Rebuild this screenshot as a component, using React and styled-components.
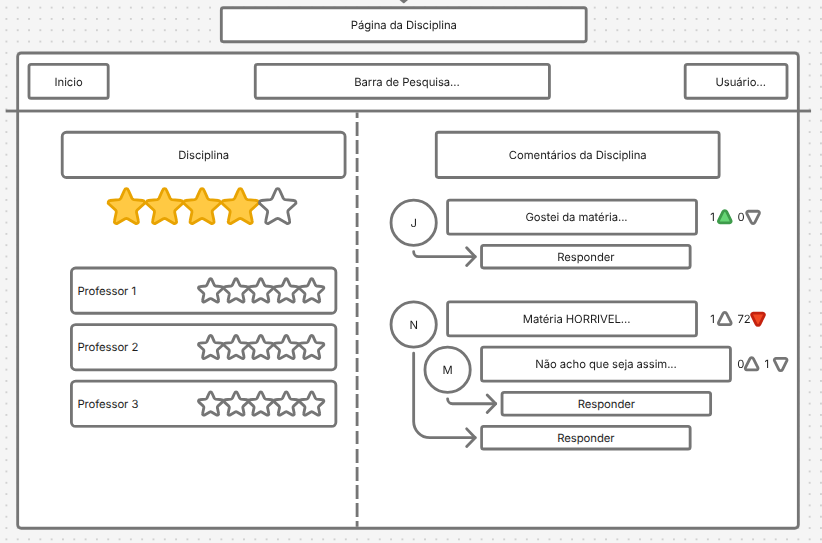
import React from "react";
import styled, { createGlobalStyle } from "styled-components";

const INK = "#757575";

const GlobalStyle = createGlobalStyle`
  *, *::before, *::after { box-sizing: border-box; }
  html, body { margin: 0; padding: 0; background: #f5f5f5; }
  svg { display: block; flex: none; overflow: visible; }
`;

const Viewport = styled.div`
  width: 822px;
  height: 543px;
  overflow: hidden;
  background: #f5f5f5;
`;

/* Board units follow a 16px dot grid, shown at 70.7% zoom. */
const Board = styled.main`
  width: 1164px;
  height: 770px;
  padding-top: 8.75px;
  transform: scale(0.70711);
  transform-origin: 0 0;
  font-family: Inter, "Liberation Sans", sans-serif;
  font-size: 16px;
  line-height: 20px;
  letter-spacing: -0.1px;
  text-rendering: geometricPrecision;
  color: #1e1e1e;
  background-image: radial-gradient(circle at 8px 8px, #b3b3b3 0.85px, transparent 1.05px);
  background-size: 16px 16px;
  background-position: 1.05px 2.75px;
`;

const Box = styled.div`
  display: flex;
  flex: none;
  align-items: center;
  justify-content: center;
  width: ${(p) => p.$w}px;
  height: ${(p) => p.$h || 52}px;
  padding-left: ${(p) => p.$indent || 0}px;
  border: 4px solid ${INK};
  border-radius: ${(p) => p.$r || 5}px;
  background: #fff;
  white-space: pre;
`;

const PageTitle = styled(Box)`
  margin-left: 311px;
`;

const Incoming = styled.svg`
  position: absolute;
  left: 565px;
  top: -6px;
`;

const Frame = styled.section`
  width: 1108px;
  height: 676px;
  margin: 12px 0 0 23px;
  border: 4px solid ${INK};
  border-radius: 7px;
  background: #fff;
`;

const Header = styled.header`
  display: flex;
  height: 78px;
  padding: 12px 12px 0;
`;

const SearchBox = styled(Box)`
  margin-left: 204px;
`;

const UserBox = styled(Box)`
  margin-left: auto;
`;

const Rule = styled.div`
  height: 4px;
  margin: 0 -19.5px;
  background: ${INK};
`;

const Body = styled.div`
  display: grid;
  grid-template-columns: 476px 4px 1fr;
  height: 586px;
`;

const DashedDivider = styled.div`
  background: repeating-linear-gradient(
    ${INK} 0 19.6px,
    transparent 19.6px 25.67px
  );
  background-position: 0 -12.2px;
  background-size: 4px 640px;
`;

const SubjectColumn = styled.section`
  padding: 26px 0 0 59px;
`;

const CommentsColumn = styled.section`
  padding: 26px 0 0 44px;
`;

const Rating = styled.div`
  display: flex;
  margin: ${(p) => p.$margin || "0"};
`;

const ProfessorList = styled.div`
  display: flex;
  flex-direction: column;
  gap: 12px;
  margin: 58px 0 0 13px;
`;

const ProfessorCard = styled(Box)`
  justify-content: space-between;
  padding-right: 14.5px;
`;

const CommentsTitle = styled(Box)`
  margin: 0 0 28px 64px;
`;

const Thread = styled.div`
  margin-bottom: 44px;
`;

const CommentRow = styled.div`
  display: flex;
  align-items: flex-start;
  margin: ${(p) => (p.$nested ? "-4px 0 0 48px" : "0")};
`;

const Avatar = styled.div`
  display: grid;
  place-items: center;
  width: 68px;
  height: 68px;
  margin-right: 12px;
  border: 4px solid ${INK};
  border-radius: 50%;
`;

const Votes = styled.div`
  display: flex;
  align-items: center;
  gap: 8.5px;
  height: 52px;
  margin-left: ${(p) => p.$gap}px;
`;

const Vote = styled.div`
  display: flex;
  align-items: center;
`;

const Count = styled.span`
  width: ${(p) => p.$w}px;
  white-space: nowrap;
`;

const ReplyRow = styled.div`
  display: flex;
  align-items: flex-end;
  gap: 4px;
  margin: ${(p) => p.$top}px 0 0 ${(p) => p.$left}px;
`;

const starPath = (k) => {
  const R = 31.1 * k;
  const r = 14.6 * k;
  const pts = Array.from({ length: 10 }, (_, i) => {
    const a = (i * Math.PI) / 5;
    const q = i % 2 ? r : R;
    return [q * Math.sin(a), -q * Math.cos(a)];
  });
  return roundedPath(pts, (i) => (i % 2 ? 2 * k : 6.5 * k), (i) => (i % 2 ? 4 * k : 2.85 * k), (i) => (i % 2 ? 0 : 1));
};

function roundedPath(pts, cut, radius, sweep) {
  const n = pts.length;
  const toward = (a, b, d) => {
    const l = Math.hypot(b[0] - a[0], b[1] - a[1]);
    return [a[0] + ((b[0] - a[0]) * d) / l, a[1] + ((b[1] - a[1]) * d) / l]
      .map((v) => v.toFixed(2))
      .join(" ");
  };
  return (
    pts
      .map((p, i) => {
        const start = toward(p, pts[(i + n - 1) % n], cut(i));
        const end = toward(p, pts[(i + 1) % n], cut(i));
        return `${i ? "L" : "M"}${start}A${radius(i)} ${radius(i)} 0 0 ${sweep(i)} ${end}`;
      })
      .join("") + "Z"
  );
}

const TRIANGLE = roundedPath(
  [[0, -12.8], [10.4, 8.2], [-10.4, 8.2]],
  (i) => (i ? 3.6 : 5.8),
  (i) => (i ? 2.3 : 2.9),
  () => 1
);

function Star({ scale = 1, on }) {
  return (
    <svg width={53.5 * scale} height={53.4 * scale} viewBox={`${-26.75 * scale} ${-28.8 * scale} ${53.5 * scale} ${53.4 * scale}`}>
      <path
        d={starPath(scale)}
        fill={on ? "#ffc943" : "none"}
        stroke={on ? "#e8a302" : INK}
        strokeWidth="4"
        strokeLinejoin="round"
      />
    </svg>
  );
}

function Stars({ value, scale, margin }) {
  return (
    <Rating $margin={margin}>
      {[0, 1, 2, 3, 4].map((i) => (
        <Star key={i} scale={scale} on={i < value} />
      ))}
    </Rating>
  );
}

function Triangle({ down, fill = "none", stroke = INK }) {
  return (
    <svg width="20" height="20" viewBox="-10 -10 20 20">
      <path
        d={TRIANGLE}
        transform={down ? "rotate(180)" : undefined}
        fill={fill}
        stroke={stroke}
        strokeWidth="4"
        strokeLinejoin="round"
      />
    </svg>
  );
}

function Connector({ width, height, radius, start }) {
  const y = height - 18;
  const tip = width - 3;
  return (
    <svg
      width={width}
      height={height}
      fill="none"
      stroke={INK}
      strokeWidth="4"
      strokeLinecap="round"
      strokeLinejoin="round"
    >
      <path d={`M2 ${start}V${y - radius}A${radius} ${radius} 0 0 0 ${2 + radius} ${y}H${tip}`} />
      <path d={`M${tip - 12} ${y - 12.5}L${tip} ${y}L${tip - 12} ${y + 12.5}`} />
    </svg>
  );
}

function Comment({ initial, text, indent, nested, gap, up, down }) {
  return (
    <CommentRow $nested={nested}>
      <Avatar>{initial}</Avatar>
      <Box $w={356} $indent={indent}>{text}</Box>
      <Votes $gap={gap}>
        <Vote>
          <Count $w={up.w}>{up.n}</Count>
          <Triangle fill={up.fill} stroke={up.stroke} />
        </Vote>
        <Vote>
          <Count $w={down.w}>{down.n}</Count>
          <Triangle down fill={down.fill} stroke={down.stroke} />
        </Vote>
      </Votes>
    </CommentRow>
  );
}

export default function App() {
  return (
    <Viewport>
      <GlobalStyle />
      <Board>
        <Incoming width="12" height="12" viewBox="0 0 12 12">
          <path d="M1 5L6 9.2L11 5" fill={INK} stroke={INK} strokeWidth="3" strokeLinejoin="round" />
        </Incoming>
        <PageTitle $w={520}>Página da Disciplina</PageTitle>
        <Frame>
          <Header>
            <Box $w={116}>Inicio</Box>
            <SearchBox $w={420} $indent={13}>Barra de Pesquisa...</SearchBox>
            <UserBox $w={148} $indent={13}>Usuário...</UserBox>
          </Header>
          <Rule />
          <Body>
            <SubjectColumn>
              <Box $w={404} $h={68} $r={8}>Disciplina</Box>
              <Stars value={4} margin="12.6px 0 0 66px" />
              <ProfessorList>
                {["Professor 1", "Professor 2", "Professor 3"].map((name) => (
                  <ProfessorCard key={name} $w={378} $h={68} $r={8} $indent={6.5}>
                    {name}
                    <Stars value={0} scale={0.667} />
                  </ProfessorCard>
                ))}
              </ProfessorList>
            </SubjectColumn>
            <DashedDivider />
            <CommentsColumn>
              <CommentsTitle $w={404} $h={68}>Comentários da Disciplina</CommentsTitle>
              <Thread>
                <Comment
                  initial="J"
                  text="Gostei da matéria..."
                  indent={12.5}
                  gap={17.5}
                  up={{ n: 1, w: 10, fill: "#66d575", stroke: "#3e9b4b" }}
                  down={{ n: 0, w: 12 }}
                />
                <ReplyRow $top={-4} $left={32}>
                  <Connector width={92} height={36} radius={7} start={11} />
                  <Box $w={299} $h={36}>Responder</Box>
                </ReplyRow>
              </Thread>
              <Thread>
                <Comment
                  initial="N"
                  text="Matéria HORRIVEL..."
                  indent={13}
                  gap={17.5}
                  up={{ n: 1, w: 10 }}
                  down={{ n: 72, w: 19, fill: "#f24822", stroke: "#c4220f" }}
                />
                <Comment
                  nested
                  initial="M"
                  text="Não acho que seja assim..."
                  gap={7.5}
                  up={{ n: 0, w: 10 }}
                  down={{ n: 1, w: 13 }}
                />
                <ReplyRow $top={-4} $left={80}>
                  <Connector width={73} height={36} radius={7} start={11} />
                  <Box $w={299} $h={36}>Responder</Box>
                </ReplyRow>
                <ReplyRow $top={-94} $left={32}>
                  <Connector width={92} height={142} radius={23} start={4.5} />
                  <Box $w={299} $h={36}>Responder</Box>
                </ReplyRow>
              </Thread>
            </CommentsColumn>
          </Body>
        </Frame>
      </Board>
    </Viewport>
  );
}
